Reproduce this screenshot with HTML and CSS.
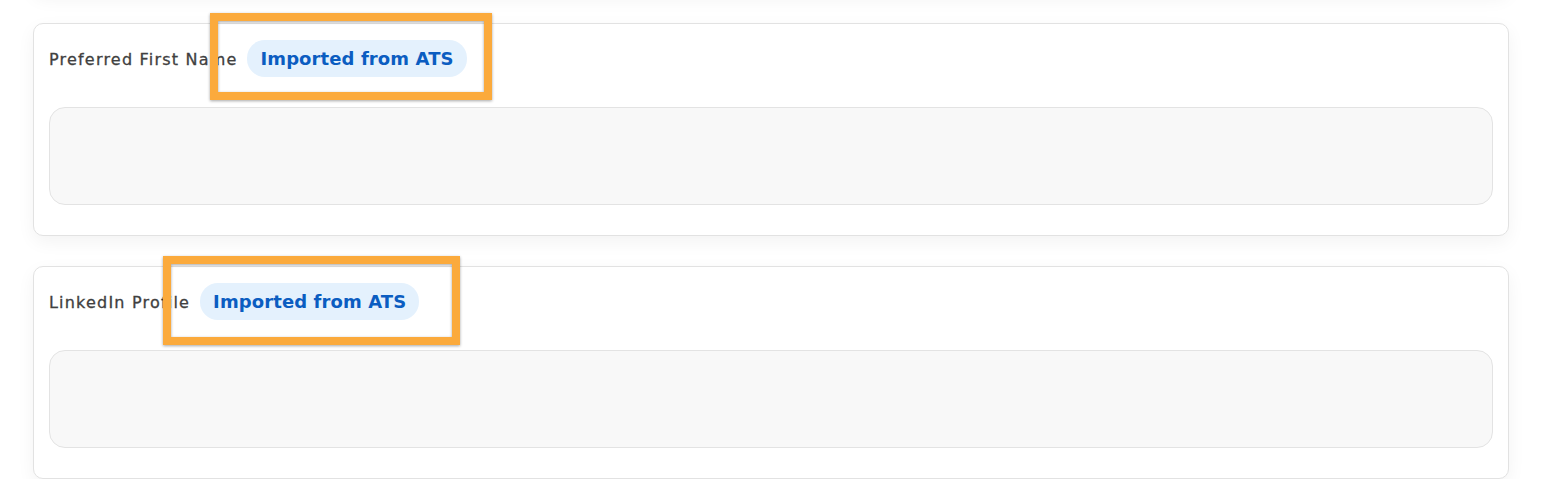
FILE: index.html
```html
<!DOCTYPE html>
<html lang="en">
<head>
<meta charset="utf-8">
<title>Imported fields</title>
<link rel="stylesheet" href="styles.css">
</head>
<body>
<div class="page">
  <div class="card card-prev"></div>
  <div class="card">
    <div class="field-head">
      <span class="label">Preferred First Name</span>
      <span class="badge-wrap">
        <span class="badge">Imported from ATS</span>
        <span class="highlight hl-a"></span>
      </span>
    </div>
    <div class="input"></div>
  </div>
  <div class="card">
    <div class="field-head">
      <span class="label">LinkedIn Profile</span>
      <span class="badge-wrap">
        <span class="badge">Imported from ATS</span>
        <span class="highlight hl-b"></span>
      </span>
    </div>
    <div class="input"></div>
  </div>
</div>
</body>
</html>
```

FILE: styles.css
```css
* { box-sizing: border-box; }
html, body { margin: 0; padding: 0; background: #ffffff; }
body { font-family: "DejaVu Sans", "Inter", sans-serif; overflow: hidden; }

.page {
  width: 1476px;
  margin-left: 33px;
  display: flex;
  flex-direction: column;
  gap: 30px;
}

.card {
  position: relative;
  background: #ffffff;
  border: 1px solid #e2e2e2;
  border-radius: 10px;
  padding: 16px 15px 30px;
  box-shadow: 0 6px 18px rgba(0, 0, 0, 0.05);
}

.card-prev {
  height: 40px;
  padding: 0;
  margin-top: -47px;
  border-color: transparent;
}

.field-head {
  display: flex;
  align-items: center;
  gap: 10px;
  height: 37px;
}

.label {
  font-size: 16px;
  font-weight: 400;
  letter-spacing: 1.2px;
  color: #404040;
  -webkit-text-stroke: 0.3px #404040;
  padding-top: 2px;
}

.badge-wrap { position: relative; display: inline-flex; }

.badge {
  display: inline-flex;
  align-items: center;
  height: 37px;
  padding: 0 13px;
  border-radius: 18px;
  background: #e4f1fd;
  color: #0b5dc1;
  font-size: 18px;
  font-weight: 700;
  letter-spacing: 0.1px;
}

.highlight {
  position: absolute;
  left: -37px;
  top: -27px;
  border: 8px solid #fbaa3c;
  filter: drop-shadow(0 1px 1.5px rgba(0, 0, 0, 0.35));
  pointer-events: none;
}
.hl-a { width: 282px; height: 87px; }
.hl-b { width: 297px; height: 89px; }

.input {
  margin-top: 30px;
  height: 98px;
  background: #f8f8f8;
  border: 1px solid #e3e3e3;
  border-radius: 16px;
}
```
